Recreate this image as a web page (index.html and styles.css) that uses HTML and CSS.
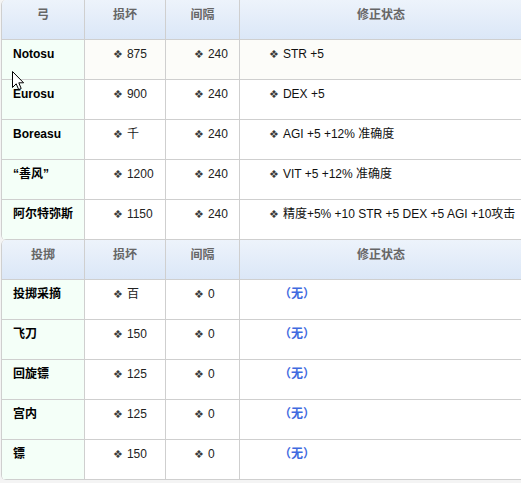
FILE: index.html
```html
<!DOCTYPE html>
<html lang="zh-CN">
<head>
<meta charset="utf-8">
<title>武器表</title>
<link rel="stylesheet" href="styles.css">
</head>
<body>
<div class="page">
  <div class="tbl">
    <div class="row head">
      <div class="c name">弓</div>
      <div class="c">损坏</div>
      <div class="c">间隔</div>
      <div class="c">修正状态</div>
    </div>
    <div class="row hl">
      <div class="c name">Notosu</div>
      <div class="c v"><span class="d">❖</span>875</div>
      <div class="c v"><span class="d">❖</span>240</div>
      <div class="c m"><span class="d">❖</span>STR +5</div>
    </div>
    <div class="row">
      <div class="c name">Eurosu</div>
      <div class="c v"><span class="d">❖</span>900</div>
      <div class="c v"><span class="d">❖</span>240</div>
      <div class="c m"><span class="d">❖</span>DEX +5</div>
    </div>
    <div class="row">
      <div class="c name">Boreasu</div>
      <div class="c v"><span class="d">❖</span>千</div>
      <div class="c v"><span class="d">❖</span>240</div>
      <div class="c m"><span class="d">❖</span>AGI +5 +12% 准确度</div>
    </div>
    <div class="row">
      <div class="c name">“善风”</div>
      <div class="c v"><span class="d">❖</span>1200</div>
      <div class="c v"><span class="d">❖</span>240</div>
      <div class="c m"><span class="d">❖</span>VIT +5 +12% 准确度</div>
    </div>
    <div class="row">
      <div class="c name">阿尔特弥斯</div>
      <div class="c v"><span class="d">❖</span>1150</div>
      <div class="c v"><span class="d">❖</span>240</div>
      <div class="c m"><span class="d">❖</span>精度+5% +10 STR +5 DEX +5 AGI +10攻击</div>
    </div>
  </div>
  <div class="tbl">
    <div class="row head">
      <div class="c name">投掷</div>
      <div class="c">损坏</div>
      <div class="c">间隔</div>
      <div class="c">修正状态</div>
    </div>
    <div class="row">
      <div class="c name">投掷采摘</div>
      <div class="c v"><span class="d">❖</span>百</div>
      <div class="c v"><span class="d">❖</span>0</div>
      <div class="c m"><span class="none">（无）</span></div>
    </div>
    <div class="row">
      <div class="c name">飞刀</div>
      <div class="c v"><span class="d">❖</span>150</div>
      <div class="c v"><span class="d">❖</span>0</div>
      <div class="c m"><span class="none">（无）</span></div>
    </div>
    <div class="row">
      <div class="c name">回旋镖</div>
      <div class="c v"><span class="d">❖</span>125</div>
      <div class="c v"><span class="d">❖</span>0</div>
      <div class="c m"><span class="none">（无）</span></div>
    </div>
    <div class="row">
      <div class="c name">宫内</div>
      <div class="c v"><span class="d">❖</span>125</div>
      <div class="c v"><span class="d">❖</span>0</div>
      <div class="c m"><span class="none">（无）</span></div>
    </div>
    <div class="row">
      <div class="c name">镖</div>
      <div class="c v"><span class="d">❖</span>150</div>
      <div class="c v"><span class="d">❖</span>0</div>
      <div class="c m"><span class="none">（无）</span></div>
    </div>
  </div>
  <svg class="cursor" width="13" height="20" viewBox="0 0 13 20">
    <path d="M0.5 0.5 L0.5 16.5 L4.2 12.8 L6.7 18.6 L9.2 17.5 L6.8 11.8 L11.6 11.8 Z" fill="#fff" stroke="#000" stroke-width="1"/>
  </svg>
</div>
</body>
</html>
```

FILE: styles.css
```css
html, body {
  margin: 0;
  padding: 0;
}
body {
  background: #f4f4f4;
  font-family: "Liberation Sans", "Noto Sans CJK SC", sans-serif;
  font-size: 12px;
  line-height: 14px;
  color: #222;
  overflow: hidden;
}
.page {
  position: relative;
  width: 521px;
}
.tbl {
  margin-left: 1px;
  width: 520px;
  border-left: 1px solid #cfcfcf;
  border-radius: 5px 0 0 5px;
  overflow: hidden;
  background: #fff;
}
.row {
  display: grid;
  grid-template-columns: 83px 81px 74px 1fr;
  height: 40px;
}
.c {
  box-sizing: border-box;
  border-right: 1px solid #cfcfcf;
  border-bottom: 1px solid #cfcfcf;
  padding-top: 7px;
  white-space: nowrap;
}
.c:last-child {
  border-right: none;
}
.head .c {
  background: linear-gradient(#edf3fb, #dbe7f7);
  color: #666;
  font-weight: bold;
  text-align: center;
  padding-top: 8px;
}
.name {
  background: #f4fff8;
  font-weight: bold;
  color: #000;
  padding-left: 11px;
}
.head .name {
  padding-left: 0;
}
.hl .c:not(.name) {
  background: #fcfcf9;
}
.v {
  padding-left: 28px;
}
.m {
  padding-left: 29px;
  color: #111;
}
.d {
  font-family: "DejaVu Sans", sans-serif;
  font-size: 11px;
  color: #3a3a3a;
  margin-right: 4px;
}
.none {
  color: #3f6ae0;
  font-weight: bold;
  margin-left: 10px;
}
.cursor {
  position: absolute;
  left: 12px;
  top: 71px;
}
```
